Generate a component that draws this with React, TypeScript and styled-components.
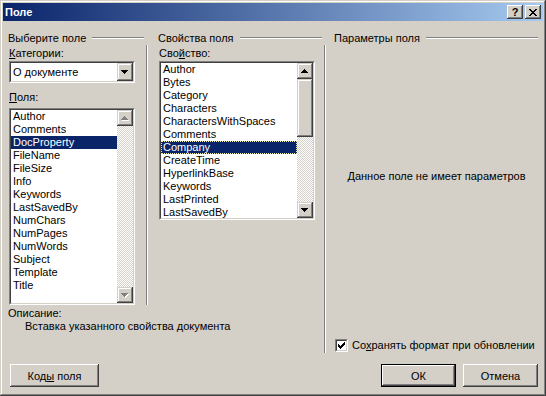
import React from "react";
import styled, { createGlobalStyle } from "styled-components";

const Global = createGlobalStyle`
  html, body { margin: 0; padding: 0; background: #d4d0c8; }
  body { font-family: "Liberation Sans", Arial, sans-serif; font-size: 11px; color: #000; }
  * { box-sizing: border-box; }
`;

const Window = styled.div`
  width: 546px;
  height: 396px;
  padding: 3px;
  background: #d4d0c8;
  display: flex;
  flex-direction: column;
  box-shadow: inset -1px -1px #404040, inset 1px 1px #d4d0c8, inset -2px -2px #808080, inset 2px 2px #ffffff;
`;

const TitleBar = styled.div`
  height: 18px;
  display: flex;
  align-items: center;
  padding: 0 2px;
  background: linear-gradient(to right, #0a246a, #a6caf0);
`;

const TitleText = styled.div`
  flex: 1;
  color: #fff;
  font-weight: bold;
  font-size: 11px;
  line-height: 18px;
`;

const TitleButtons = styled.div`
  display: flex;
  gap: 2px;
`;

const CaptionButton = styled.div`
  width: 16px;
  height: 14px;
  background: #d4d0c8;
  display: flex;
  align-items: center;
  justify-content: center;
  font-weight: bold;
  font-size: 11px;
  line-height: 14px;
  box-shadow: inset -1px -1px #404040, inset 1px 1px #ffffff, inset -2px -2px #808080, inset 2px 2px #d4d0c8;
`;

const Body = styled.div`
  flex: 1;
  display: flex;
  flex-direction: column;
  padding: 10px 5px 0 5px;
`;

const MainArea = styled.div`
  display: flex;
`;

const LeftBlock = styled.div`
  width: 316px;
  display: flex;
  flex-direction: column;
`;

const ColumnsRow = styled.div`
  display: flex;
`;

const Column = styled.div<{ $w?: number }>`
  ${(p) => (p.$w ? `width: ${p.$w}px;` : "flex: 1;")}
  display: flex;
  flex-direction: column;
`;

const GroupHeader = styled.div<{ $pl: number; $pr: number }>`
  height: 14px;
  display: flex;
  align-items: center;
  gap: 6px;
  padding-left: ${(p) => p.$pl}px;
  padding-right: ${(p) => p.$pr}px;
`;

const GroupTitle = styled.span`
  line-height: 14px;
  white-space: nowrap;
`;

const EtchedLine = styled.div`
  flex: 1;
  height: 2px;
  border-top: 1px solid #808080;
  border-bottom: 1px solid #ffffff;
`;

const GroupPanel = styled.div<{ $sep?: boolean; $pl: number; $pr: number; $h?: number }>`
  flex: 1;
  display: flex;
  flex-direction: column;
  align-items: flex-start;
  padding: 2px ${(p) => p.$pr}px 0 ${(p) => p.$pl}px;
  ${(p) => (p.$h ? `height: ${p.$h}px; flex: none;` : "")}
  ${(p) =>
    p.$sep
      ? `border-left: 1px solid #808080; box-shadow: inset 1px 0 #ffffff;`
      : ""}
`;

const FieldLabel = styled.div<{ $mt?: number; $mb?: number }>`
  line-height: 13px;
  height: 13px;
  margin-top: ${(p) => p.$mt ?? 0}px;
  margin-bottom: ${(p) => p.$mb ?? 0}px;
  white-space: nowrap;
`;

const Key = styled.span`
  text-decoration: underline;
`;

const Well = styled.div<{ $w: number; $h: number }>`
  width: ${(p) => p.$w}px;
  height: ${(p) => p.$h}px;
  border: 1px solid;
  border-color: #808080 #ffffff #ffffff #808080;
  flex: none;
`;

const WellInner = styled.div`
  height: 100%;
  border: 1px solid;
  border-color: #404040 #d4d0c8 #d4d0c8 #404040;
  background: #fff;
  display: flex;
  overflow: hidden;
`;

const ComboValue = styled.div`
  flex: 1;
  padding-left: 2px;
  line-height: 18px;
  white-space: nowrap;
`;

const scrollRaised = `
  background: #d4d0c8;
  box-shadow: inset -1px -1px #404040, inset 1px 1px #d4d0c8, inset -2px -2px #808080, inset 2px 2px #ffffff;
`;

const DropButton = styled.div`
  width: 16px;
  height: 18px;
  display: flex;
  align-items: center;
  justify-content: center;
  ${scrollRaised}
`;

const Items = styled.div`
  flex: 1;
  overflow: hidden;
  display: flex;
  flex-direction: column;
`;

const ListItem = styled.div<{ $selected?: boolean; $focus?: boolean }>`
  height: 13px;
  line-height: 13px;
  padding-left: 2px;
  white-space: nowrap;
  flex: none;
  background: ${(p) => (p.$selected ? "#0a246a" : "transparent")};
  color: ${(p) => (p.$selected ? "#fff" : "#000")};
  ${(p) => (p.$focus ? "outline: 1px dotted #f0f0b0; outline-offset: -1px;" : "")}
`;

const ScrollBar = styled.div`
  width: 16px;
  display: flex;
  flex-direction: column;
`;

const ScrollButton = styled.div`
  width: 16px;
  height: 16px;
  flex: none;
  display: flex;
  align-items: center;
  justify-content: center;
  ${scrollRaised}
`;

const Track = styled.div`
  flex: 1;
  background-color: #d4d0c8;
  background-image: conic-gradient(#ffffff 25%, #d4d0c8 0 50%, #ffffff 0 75%, #d4d0c8 0);
  background-size: 2px 2px;
`;

const Thumb = styled.div<{ $h: number }>`
  height: ${(p) => p.$h}px;
  ${scrollRaised}
`;

const Description = styled.div`
  padding-top: 2px;
  display: flex;
  flex-direction: column;
`;

const DescLine = styled.div<{ $indent?: number }>`
  line-height: 13px;
  height: 13px;
  padding-left: ${(p) => p.$indent ?? 0}px;
  white-space: nowrap;
`;

const Message = styled.div`
  align-self: stretch;
  text-align: center;
  margin-top: 123px;
  line-height: 13px;
  white-space: nowrap;
`;

const CheckRow = styled.div`
  margin-top: auto;
  margin-bottom: 1px;
  display: flex;
  align-items: center;
  gap: 4px;
  height: 13px;
  line-height: 13px;
  white-space: nowrap;
`;

const CheckBoxFrame = styled.div`
  width: 13px;
  height: 13px;
  flex: none;
  border: 1px solid;
  border-color: #808080 #ffffff #ffffff #808080;
`;

const CheckBoxInner = styled.div`
  width: 100%;
  height: 100%;
  border: 1px solid;
  border-color: #404040 #d4d0c8 #d4d0c8 #404040;
  background: #fff;
  display: flex;
  align-items: center;
  justify-content: center;
`;

const ButtonRow = styled.div`
  margin-top: 11px;
  display: flex;
  align-items: center;
  gap: 7px;
`;

const PushButton = styled.div<{ $w: number; $default?: boolean; $ml?: number }>`
  width: ${(p) => p.$w}px;
  height: 23px;
  margin-left: ${(p) => p.$ml ?? 0}px;
  display: flex;
  align-items: center;
  justify-content: center;
  background: #d4d0c8;
  white-space: nowrap;
  ${(p) =>
    p.$default
      ? `border: 1px solid #000; box-shadow: inset -1px -1px #404040, inset 1px 1px #ffffff, inset -2px -2px #808080;`
      : `box-shadow: inset -1px -1px #404040, inset 1px 1px #ffffff, inset -2px -2px #808080, inset 2px 2px #d4d0c8;`}
`;

const Spacer = styled.div`
  flex: 1;
`;

const Arrow = ({ up, disabled }: { up?: boolean; disabled?: boolean }) => {
  const rows = [0, 1, 2, 3].map((i) => ({ x: i, y: up ? 3 - i : i, w: 7 - 2 * i }));
  return (
    <svg width="8" height="5" viewBox="0 0 8 5" shapeRendering="crispEdges">
      {disabled &&
        rows.map((r, i) => (
          <rect key={"s" + i} x={r.x + 1} y={r.y + 1} width={r.w} height={1} fill="#ffffff" />
        ))}
      {rows.map((r, i) => (
        <rect key={i} x={r.x} y={r.y} width={r.w} height={1} fill={disabled ? "#808080" : "#000000"} />
      ))}
    </svg>
  );
};

const CheckMark = () => {
  const ys = [2, 3, 4, 3, 2, 1, 0];
  return (
    <svg width="7" height="7" viewBox="0 0 7 7" shapeRendering="crispEdges">
      {ys.map((y, x) => (
        <rect key={x} x={x} y={y} width={1} height={3} fill="#000" />
      ))}
    </svg>
  );
};

const CloseGlyph = () => (
  <svg width="8" height="7" viewBox="0 0 8 7" shapeRendering="crispEdges">
    {[0, 1, 2, 3, 4, 5, 6].map((i) => (
      <React.Fragment key={i}>
        <rect x={i} y={i} width={2} height={1} fill="#000" />
        <rect x={6 - i} y={i} width={2} height={1} fill="#000" />
      </React.Fragment>
    ))}
  </svg>
);

const fields = [
  "Author",
  "Comments",
  "DocProperty",
  "FileName",
  "FileSize",
  "Info",
  "Keywords",
  "LastSavedBy",
  "NumChars",
  "NumPages",
  "NumWords",
  "Subject",
  "Template",
  "Title",
];

const props = [
  "Author",
  "Bytes",
  "Category",
  "Characters",
  "CharactersWithSpaces",
  "Comments",
  "Company",
  "CreateTime",
  "HyperlinkBase",
  "Keywords",
  "LastPrinted",
  "LastSavedBy",
];

export default function App() {
  return (
    <>
      <Global />
      <Window>
        <TitleBar>
          <TitleText>Поле</TitleText>
          <TitleButtons>
            <CaptionButton>?</CaptionButton>
            <CaptionButton>
              <CloseGlyph />
            </CaptionButton>
          </TitleButtons>
        </TitleBar>
        <Body>
          <MainArea>
            <LeftBlock>
              <ColumnsRow>
                <Column $w={138}>
                  <GroupHeader $pl={0} $pr={2}>
                    <GroupTitle>Выберите поле</GroupTitle>
                    <EtchedLine />
                  </GroupHeader>
                  <GroupPanel $pl={1} $pr={11}>
                    <FieldLabel $mb={1}>
                      <Key>К</Key>атегории:
                    </FieldLabel>
                    <Well $w={126} $h={22}>
                      <WellInner>
                        <ComboValue>О документе</ComboValue>
                        <DropButton>
                          <Arrow />
                        </DropButton>
                      </WellInner>
                    </Well>
                    <FieldLabel $mt={8} $mb={4}>
                      <Key>П</Key>оля:
                    </FieldLabel>
                    <Well $w={126} $h={197}>
                      <WellInner>
                        <Items>
                          {fields.map((f) => (
                            <ListItem key={f} $selected={f === "DocProperty"}>
                              {f}
                            </ListItem>
                          ))}
                        </Items>
                        <ScrollBar>
                          <ScrollButton>
                            <Arrow up disabled />
                          </ScrollButton>
                          <Track />
                          <ScrollButton>
                            <Arrow disabled />
                          </ScrollButton>
                        </ScrollBar>
                      </WellInner>
                    </Well>
                  </GroupPanel>
                </Column>
                <Column $w={178}>
                  <GroupHeader $pl={12} $pr={2}>
                    <GroupTitle>Свойства поля</GroupTitle>
                    <EtchedLine />
                  </GroupHeader>
                  <GroupPanel $sep $pl={12} $pr={9}>
                    <FieldLabel $mb={1}>
                      Сво<Key>й</Key>ство:
                    </FieldLabel>
                    <Well $w={156} $h={159}>
                      <WellInner>
                        <Items>
                          {props.map((f) => (
                            <ListItem key={f} $selected={f === "Company"} $focus={f === "Company"}>
                              {f}
                            </ListItem>
                          ))}
                        </Items>
                        <ScrollBar>
                          <ScrollButton>
                            <Arrow up />
                          </ScrollButton>
                          <Track>
                            <Thumb $h={58} />
                          </Track>
                          <ScrollButton>
                            <Arrow />
                          </ScrollButton>
                        </ScrollBar>
                      </WellInner>
                    </Well>
                  </GroupPanel>
                </Column>
              </ColumnsRow>
              <Description>
                <DescLine>Описание:</DescLine>
                <DescLine $indent={17}>Вставка указанного свойства документа</DescLine>
              </Description>
            </LeftBlock>
            <Column>
              <GroupHeader $pl={10} $pr={0}>
                <GroupTitle>Параметры поля</GroupTitle>
                <EtchedLine />
              </GroupHeader>
              <GroupPanel $sep $pl={10} $pr={0} $h={308}>
                <Message>Данное поле не имеет параметров</Message>
                <CheckRow>
                  <CheckBoxFrame>
                    <CheckBoxInner>
                      <CheckMark />
                    </CheckBoxInner>
                  </CheckBoxFrame>
                  <span>
                    Со<Key>х</Key>ранять формат при обновлении
                  </span>
                </CheckRow>
              </GroupPanel>
            </Column>
          </MainArea>
          <ButtonRow>
            <PushButton $w={89} $ml={2}>
              <span>
                Код<Key>ы</Key> поля
              </span>
            </PushButton>
            <Spacer />
            <PushButton $w={75} $default>
              <span>ОК</span>
            </PushButton>
            <PushButton $w={75}>
              <span>Отмена</span>
            </PushButton>
          </ButtonRow>
        </Body>
      </Window>
    </>
  );
}
